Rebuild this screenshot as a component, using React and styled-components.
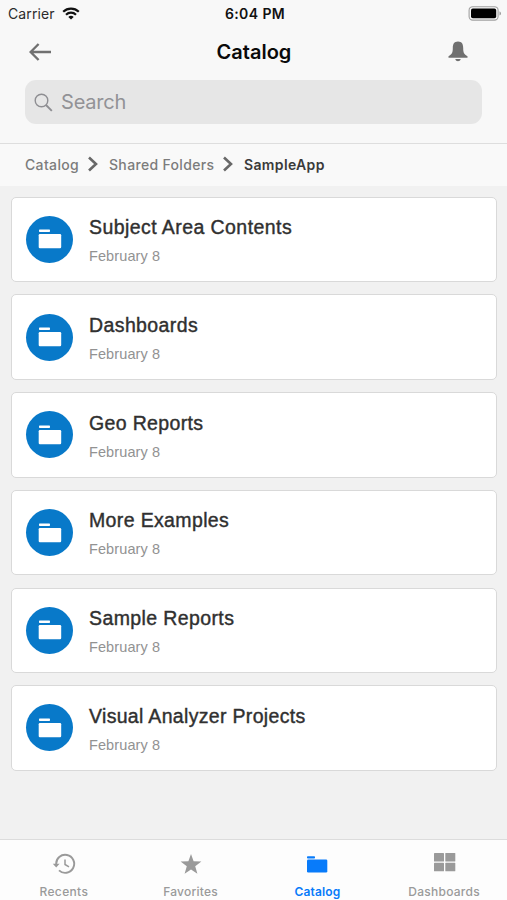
import React from "react";
import styled, { createGlobalStyle } from "styled-components";

const GlobalStyle = createGlobalStyle`
  * { box-sizing: border-box; }
  body { margin: 0; background: #f1f1f1; }
`;

const Screen = styled.div`
  width: 507px;
  height: 900px;
  display: flex;
  flex-direction: column;
  overflow: hidden;
  background: #f1f1f1;
  font-family: Inter, "Liberation Sans", sans-serif;
`;

const Header = styled.header`
  height: 143.5px;
  background: #f8f8f8;
  border-bottom: 1px solid #dedede;
  flex: none;
`;

const StatusBar = styled.div`
  height: 27px;
  padding: 0 5px 0 8px;
  display: grid;
  grid-template-columns: 1fr auto 1fr;
  align-items: center;
`;

const Carrier = styled.div`
  display: flex;
  align-items: center;
  gap: 7px;
  font-size: 14px;
  letter-spacing: 0.1px;
  color: #2b2b2b;
`;

const Clock = styled.div`
  font-size: 14px;
  font-weight: 600;
  letter-spacing: 0.4px;
  color: #111;
`;

const Battery = styled.div`
  display: flex;
  justify-content: flex-end;
  height: 15px;
`;

const TitleBar = styled.div`
  height: 49px;
  padding: 0 39px 0 29px;
  display: grid;
  grid-template-columns: 1fr auto 1fr;
  align-items: center;
`;

const Title = styled.h1`
  margin: 0 0 0 11px;
  font-size: 20px;
  font-weight: 600;
  letter-spacing: 0;
  color: #0a0a0a;
`;

const IconSlot = styled.div`
  display: flex;
  justify-content: ${(p) => (p.$end ? "flex-end" : "flex-start")};
`;

const SearchField = styled.div`
  margin: 4px 25px 0;
  height: 44px;
  padding-left: 9px;
  border-radius: 11px;
  background: #e6e6e6;
  display: flex;
  align-items: center;
  gap: 8px;
  font-size: 20px;
  letter-spacing: -0.2px;
  color: #929296;
`;

const Breadcrumbs = styled.nav`
  height: 42.5px;
  flex: none;
  padding-left: 25px;
  display: flex;
  align-items: center;
  background: #f9f9f9;
`;

const Crumb = styled.span`
  width: ${(p) => p.$w}px;
  font-size: 14px;
  white-space: nowrap;
  font-weight: ${(p) => (p.$current ? 600 : 500)};
  letter-spacing: ${(p) => p.$ls || 0}px;
  color: ${(p) => (p.$current ? "#3a3a3a" : "#7c7c7c")};
`;

const CrumbArrow = styled.svg`
  margin: 0 10px 1px 8px;
  flex: none;
`;

const List = styled.main`
  flex: 1;
  padding: 10.8px 10px 0 11px;
  display: flex;
  flex-direction: column;
  gap: 12.3px;
`;

const Card = styled.article`
  height: 85.4px;
  flex: none;
  padding-left: 14px;
  display: flex;
  align-items: center;
  gap: 16px;
  background: #fff;
  border: 1px solid #d9d9d9;
  border-radius: 5px;
`;

const Disc = styled.div`
  width: 47px;
  height: 47px;
  border-radius: 50%;
  background: #0879c9;
  display: flex;
  align-items: center;
  justify-content: center;
`;

const CardText = styled.div`
  font-family: "Liberation Sans", Arial, sans-serif;
  padding-top: 1.4px;
`;

const CardTitle = styled.div`
  font-size: 19.5px;
  line-height: 24px;
  letter-spacing: ${(p) => p.$ls || 0}px;
  color: #303030;
  -webkit-text-stroke: 0.4px #303030;
`;

const CardDate = styled.div`
  margin-top: 8px;
  font-size: 14.5px;
  line-height: 18px;
  letter-spacing: 0.1px;
  color: #929292;
`;

const TabBar = styled.nav`
  height: 61px;
  flex: none;
  border-top: 1.5px solid #dcdcdc;
  background: #fdfdfd;
  display: grid;
  grid-template-columns: repeat(4, 1fr);
`;

const Tab = styled.div`
  padding: 12px 0 0 1px;
  display: flex;
  flex-direction: column;
  align-items: center;
  color: ${(p) => (p.$active ? "#087bfa" : "#9a9a9a")};
`;

const TabLabel = styled.span`
  margin-top: 8px;
  font-size: 12px;
  line-height: 15px;
  font-weight: ${(p) => (p.$active ? 600 : 500)};
  letter-spacing: ${(p) => p.$ls}px;
`;

const WifiIcon = () => (
  <svg width="18" height="13" viewBox="0 0 18 13" fill="none" stroke="#111" strokeWidth="2.2">
    <path d="M1.2 4.7C5.6.5 12.4.5 16.8 4.7" />
    <path d="M4 7.7C6.8 5 11.2 5 14 7.7" />
    <path d="M9 12.6 6.3 9.9C7.8 8.5 10.2 8.5 11.7 9.9Z" fill="#111" stroke="none" />
  </svg>
);

const BatteryIcon = () => (
  <svg width="34" height="15" viewBox="0 0 34 15">
    <rect x="1.1" y=".7" width="29" height="13.4" rx="3.6" fill="#f8f8f8" stroke="#a0a0a0" strokeWidth="1.1" />
    <rect x="3" y="2.6" width="25.2" height="9.6" rx="1.8" fill="#000" />
    <path d="M31.5 5.2c2 .8 2 3.6 0 4.4Z" fill="#999" />
  </svg>
);

const BackIcon = () => (
  <svg width="23" height="18" viewBox="0 0 23 18" fill="none" stroke="#707070" strokeWidth="2.4">
    <path d="M22 9H2M9.6 1 1.6 9l8 8" />
  </svg>
);

const BellIcon = () => (
  <svg width="20" height="21" viewBox="0 0 20 21" fill="#707070">
    <path d="M10 .5c4 0 5.2 2.8 5.2 6.4 0 4.9.9 6.2 4.300 8.400v1.400H.5v-1.400c3.400-2.200 4.300-3.500 4.300-8.400C4.800 3.300 6 .5 10 .5Z" />
    <path d="M7.300 18h5.400c-.5 3-4.900 3-5.400 0Z" />
  </svg>
);

const SearchIcon = () => (
  <svg width="19" height="19" viewBox="0 0 19 19" fill="none" stroke="#8e8e92">
    <circle cx="7.500" cy="7.500" r="6.300" strokeWidth="1.400" />
    <path d="m12 12 5.800 5.800" strokeWidth="1.900" />
  </svg>
);

const Chevron = () => (
  <CrumbArrow width="12" height="16" viewBox="0 0 12 16" fill="none" stroke="#686868" strokeWidth="2.600">
    <path d="m2 1.500 7 6.500-7 6.500" />
  </CrumbArrow>
);

const FolderIcon = () => (
  <svg width="24" height="20" viewBox="0 0 24 20" fill="#fff">
    <rect x="1" y=".5" width="11" height="2.500" rx=".7" />
    <rect x=".7" y="5" width="22.500" height="14.300" rx="1.200" />
  </svg>
);

const RecentsIcon = () => (
  <svg width="24" height="24" viewBox="0 0 24 24" fill="none" stroke="currentColor" strokeWidth="1.900">
    <path d="M4.200 12.500A9 9 0 1 1 7 18.400" />
    <path d="M13 7.500v5l4 2.400" strokeWidth="1.500" />
    <path d="M.8 11.800h6.800L4.200 15.500Z" fill="currentColor" stroke="none" />
  </svg>
);

const StarIcon = () => (
  <svg width="24" height="24" viewBox="0 0 24 24" fill="currentColor">
    <path d="m12 2.100 2.600 7.100 7.800.2-6.200 4.800 2.200 7.500L12 17.400l-6.400 4.300 2.200-7.500L1.600 9.400l7.800-.2Z" />
  </svg>
);

const CatalogIcon = () => (
  <svg width="24" height="24" viewBox="0 0 24 24" fill="currentColor">
    <rect x="2" y="4.300" width="8" height="2.200" rx=".8" />
    <rect x="2" y="7.500" width="20.300" height="13" rx="1.200" />
  </svg>
);

const GridIcon = () => (
  <svg width="24" height="24" viewBox="0 0 24 24" fill="currentColor">
    <rect x="2" y="1" width="10" height="8.500" rx=".6" />
    <rect x="13.300" y="1" width="10" height="8.500" rx=".6" />
    <rect x="2" y="10.800" width="10" height="8.500" rx=".6" />
    <rect x="13.300" y="10.800" width="10" height="8.500" rx=".6" />
  </svg>
);

const folders = [
  { name: "Subject Area Contents", ls: 0.43 },
  { name: "Dashboards", ls: 0.4 },
  { name: "Geo Reports", ls: 0.35 },
  { name: "More Examples", ls: 0.36 },
  { name: "Sample Reports", ls: 0.39 },
  { name: "Visual Analyzer Projects", ls: 0.32 },
];

const tabs = [
  { name: "Recents", Icon: RecentsIcon, ls: 0.35 },
  { name: "Favorites", Icon: StarIcon, ls: 0.25 },
  { name: "Catalog", Icon: CatalogIcon, ls: 0.15, active: true },
  { name: "Dashboards", Icon: GridIcon, ls: 0.25 },
];

export default function App() {
  return (
    <Screen>
      <GlobalStyle />
      <Header>
        <StatusBar>
          <Carrier>Carrier<WifiIcon /></Carrier>
          <Clock>6:04 PM</Clock>
          <Battery><BatteryIcon /></Battery>
        </StatusBar>
        <TitleBar>
          <IconSlot><BackIcon /></IconSlot>
          <Title>Catalog</Title>
          <IconSlot $end><BellIcon /></IconSlot>
        </TitleBar>
        <SearchField><SearchIcon />Search</SearchField>
      </Header>
      <Breadcrumbs>
        <Crumb $w={54} $ls={0.35}>Catalog</Crumb>
        <Chevron />
        <Crumb $w={105} $ls={0.33}>Shared Folders</Crumb>
        <Chevron />
        <Crumb $w={82} $ls={0.35} $current>SampleApp</Crumb>
      </Breadcrumbs>
      <List>
        {folders.map((f) => (
          <Card key={f.name}>
            <Disc><FolderIcon /></Disc>
            <CardText>
              <CardTitle $ls={f.ls}>{f.name}</CardTitle>
              <CardDate>February 8</CardDate>
            </CardText>
          </Card>
        ))}
      </List>
      <TabBar>
        {tabs.map(({ name, Icon, ls, active }) => (
          <Tab key={name} $active={active}>
            <Icon />
            <TabLabel $ls={ls} $active={active}>{name}</TabLabel>
          </Tab>
        ))}
      </TabBar>
    </Screen>
  );
}
